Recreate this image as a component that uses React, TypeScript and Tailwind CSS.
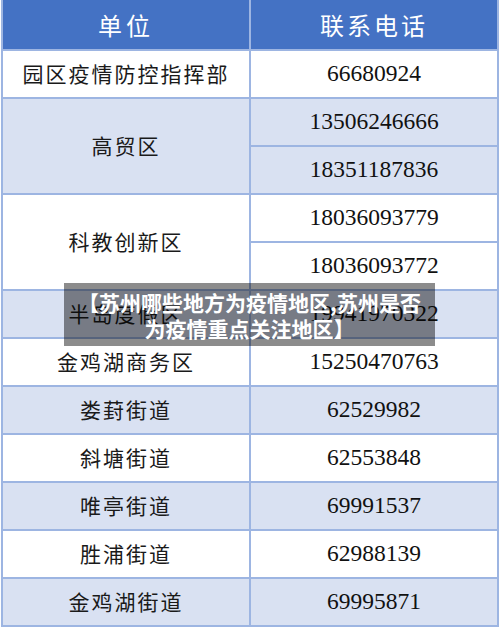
import React from "react";

type Row = { unit?: string; tall?: boolean; phone: string; light: boolean };

const rows: Row[] = [
  { unit: "园区疫情防控指挥部", phone: "66680924", light: false },
  { unit: "高贸区", tall: true, phone: "13506246666", light: true },
  { phone: "18351187836", light: true },
  { unit: "科教创新区", tall: true, phone: "18036093779", light: false },
  { phone: "18036093772", light: false },
  { unit: "半岛度假区", phone: "19941970322", light: true },
  { unit: "金鸡湖商务区", phone: "15250470763", light: false },
  { unit: "娄葑街道", phone: "62529982", light: true },
  { unit: "斜塘街道", phone: "62553848", light: false },
  { unit: "唯亭街道", phone: "69991537", light: true },
  { unit: "胜浦街道", phone: "62988139", light: false },
  { unit: "金鸡湖街道", phone: "69995871", light: true },
];

export default function App() {
  return (
    <div className="relative w-[500px] h-[630px] bg-white overflow-hidden">
      <div className="ml-[1px] w-[498px] px-[2px] pb-[2px] bg-[#9DB5E2]">
        <div className="grid grid-cols-2 gap-[2px] grid-rows-[49px_repeat(12,46px)] font-['Noto_Sans_CJK_SC',sans-serif]">
          <div className="bg-[#4472C4] text-white text-[24px] tracking-[4px] flex items-center justify-center">
            单位
          </div>
          <div className="bg-[#4472C4] text-white text-[24px] tracking-[3px] flex items-center justify-center">
            联系电话
          </div>
          {rows.map((r, i) => (
            <React.Fragment key={i}>
              {r.unit && (
                <div
                  className={`col-start-1 flex items-center justify-center text-[21px] tracking-[2px] text-[#1a1a1a] ${
                    r.tall ? "row-span-2" : ""
                  } ${r.light ? "bg-[#D9E1F2]" : "bg-white"}`}
                >
                  {r.unit}
                </div>
              )}
              <div
                className={`col-start-2 flex items-center justify-center text-[23.5px] text-[#111] font-['Liberation_Serif',serif] ${
                  r.light ? "bg-[#D9E1F2]" : "bg-white"
                }`}
              >
                {r.phone}
              </div>
            </React.Fragment>
          ))}
        </div>
      </div>
      <div className="absolute left-[64px] top-[283px] w-[371px] h-[63px] bg-black/45 flex items-center justify-center text-center text-white font-bold text-[21px] leading-[26px] font-['Noto_Sans_CJK_SC',sans-serif]">
        <p>
          【苏州哪些地方为疫情地区,苏州是否
          <br />
          为疫情重点关注地区】
        </p>
      </div>
    </div>
  );
}
